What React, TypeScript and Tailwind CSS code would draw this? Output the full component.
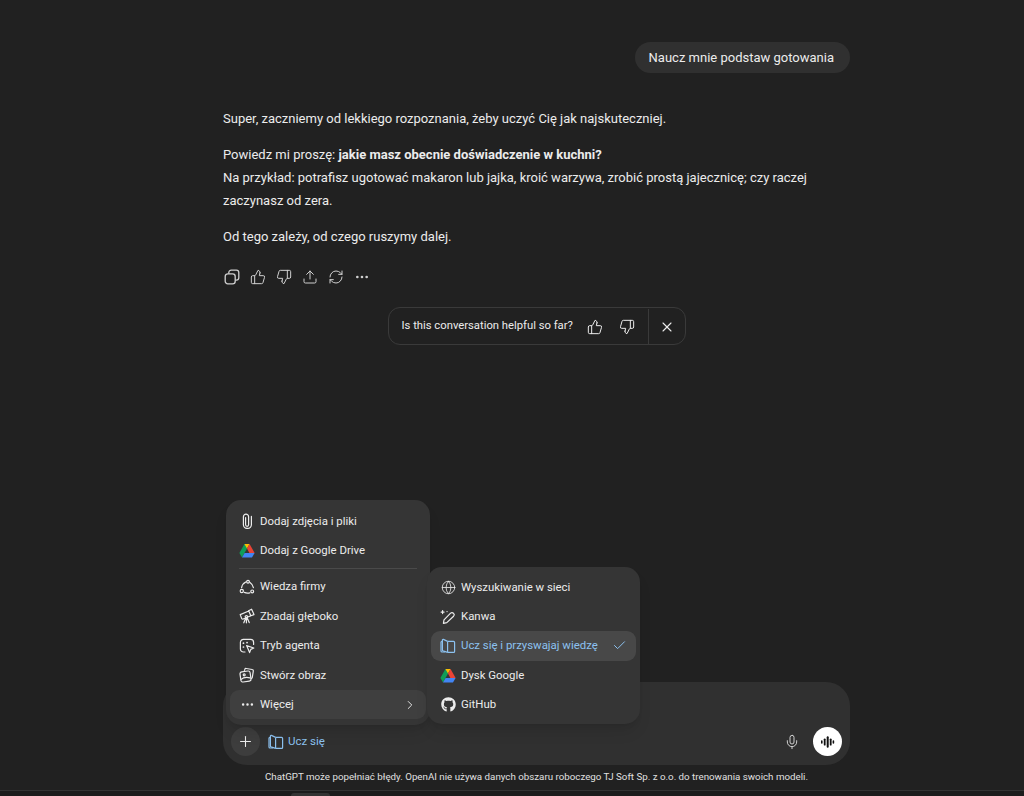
import React from "react";
import { Check, ChevronRight, Ellipsis, Globe, Mic, Plus, RefreshCw, ThumbsDown, ThumbsUp, Upload, X } from "lucide-react";
import { FaGithub } from "react-icons/fa";

function DriveIcon() {
  return (
    <svg width="16" height="15" viewBox="0 0 16 15" aria-hidden className="shrink-0">
      <path d="M5.4 1h5.2l-2.6 4.6-2.6 0z" fill="#fbbc04" />
      <path d="M5.4 1 .4 10l2.6 4.4L8 5.6z" fill="#0f9d58" />
      <path d="M10.6 1 15.6 10H10.4L8 5.6z" fill="#ea4335" />
      <path d="M5.6 10h10l-2.6 4.4H3z" fill="#4285f4" />
    </svg>
  );
}

function BookIcon({ className }: { className?: string }) {
  return (
    <svg width="16" height="16" viewBox="0 0 16 16" fill="none" stroke="currentColor" strokeWidth="1.2" strokeLinejoin="round" className={className} aria-hidden>
      <path d="M7.6 3.4v11" />
      <path d="M7.6 3.4h6a1 1 0 0 1 1 1v9a1 1 0 0 1-1 1h-6" />
      <path d="M7.6 3.4 3.4 1.4c-.5-.2-1 .1-1 .6v10c0 .4.2.7.6.9l4.6 1.5" />
      <path d="M2.4 3.4h-.4a1 1 0 0 0-1 1v8.6a1 1 0 0 0 1 1h3" />
    </svg>
  );
}

function CopyIcon() {
  return (
    <svg width="16" height="16" viewBox="0 0 16 16" fill="none" stroke="currentColor" strokeWidth="1.3" aria-hidden>
      <rect x="1.2" y="4.8" width="10" height="10" rx="2.6" />
      <path d="M4.8 4.8V3.6a2.4 2.4 0 0 1 2.4-2.4h5.2a2.4 2.4 0 0 1 2.4 2.4v5.2a2.4 2.4 0 0 1-2.4 2.4h-1.2" />
    </svg>
  );
}

function ClipIcon() {
  return (
    <svg width="16" height="16" viewBox="0 0 16 16" fill="none" stroke="currentColor" strokeWidth="1.2" strokeLinecap="round" aria-hidden>
      <path d="M6.6 4.6v7.2a1.5 1.5 0 0 0 3 0V3.8a2.6 2.6 0 0 0-5.2 0 0 0 0 0 0 0 0v8a3.6 3.6 0 0 0 3.6 3.6h.8a3.6 3.6 0 0 0 3.6-3.6V3.4" />
    </svg>
  );
}

function CompanyIcon() {
  return (
    <svg width="16" height="16" viewBox="0 0 16 16" fill="none" stroke="currentColor" strokeWidth="1.2" aria-hidden>
      <circle cx="9" cy="2.8" r="1.4" />
      <circle cx="2.8" cy="12" r="1.6" />
      <circle cx="13.2" cy="12.4" r="1.4" />
      <path d="M6.8 3C4.8 4 3 6 2.6 8.6M11 3.4c1.8 1.2 3 3 3.4 5.2M5.4 13.4c1.6.8 3.2.9 5.4.5" strokeLinecap="round" />
    </svg>
  );
}

function TelescopeIcon() {
  return (
    <svg width="16" height="16" viewBox="0 0 16 16" fill="none" stroke="currentColor" strokeWidth="1.2" strokeLinejoin="round" strokeLinecap="round" aria-hidden>
      <path d="M1.2 6.6 9.8 3l2 4.8-7.6 3.2a1.2 1.2 0 0 1-1.6-.6z" />
      <path d="M9.6 2.8 12.6 1.2l2.4 5.4-3.2 1.2" />
      <circle cx="7.4" cy="8.8" r="1.2" />
      <path d="M6.6 10.2 4.8 14.8M8.2 10 10.2 14.6M7.4 10.2v4.6" />
    </svg>
  );
}

function AgentIcon() {
  return (
    <svg width="16" height="16" viewBox="0 0 16 16" fill="none" stroke="currentColor" strokeWidth="1.2" strokeLinejoin="round" strokeLinecap="round" aria-hidden>
      <path d="M6 14H4.4a3 3 0 0 1-3-3V4.4a3 3 0 0 1 3-3h7.2a3 3 0 0 1 3 3v2" />
      <path d="M7.6 7.6 14.8 10l-3 1.4-1.2 3.2z" />
      <path d="M4.4 5.2h.1M4.4 9h.1M8 4.6h.1" strokeWidth="1.7" />
    </svg>
  );
}

function ImageIcon() {
  return (
    <svg width="16" height="16" viewBox="0 0 16 16" fill="none" stroke="currentColor" strokeWidth="1.2" strokeLinejoin="round" strokeLinecap="round" aria-hidden>
      <path d="M5.4 3.4 5.8 2.4c.2-.7.8-1 1.4-.9l6 1c.8.1 1.3.8 1.1 1.6l-1 6.2c-.1.6-.5 1-1.1 1.2" />
      <rect x="1.4" y="4.4" width="10.2" height="10.2" rx="2" transform="rotate(-8 6.5 9.5)" />
      <circle cx="5.2" cy="7.8" r="1" />
      <path d="M2.2 12.4c2-2 4.6-2.4 8.8-1.6" />
    </svg>
  );
}

function PencilIcon() {
  return (
    <svg width="16" height="16" viewBox="0 0 16 16" fill="none" stroke="currentColor" strokeWidth="1.2" strokeLinejoin="round" strokeLinecap="round" aria-hidden>
      <path d="M3.4 14.4 4 10.8 10.6 4.2a2 2 0 0 1 2.8 0l.2.2a2 2 0 0 1 0 2.8L6.8 13.6z" />
      <path d="M2.6 1.6v3M1.1 3.1h3M7 2.6h.1" />
    </svg>
  );
}

function VoiceIcon() {
  return (
    <svg width="15" height="14" viewBox="0 0 15 14" fill="#111" aria-hidden>
      <rect x="1" y="5.2" width="1.6" height="3.6" rx=".8" />
      <rect x="3.8" y="3.4" width="1.8" height="7.2" rx=".9" />
      <rect x="6.7" y="1.2" width="2" height="11.6" rx="1" />
      <rect x="9.8" y="3.4" width="1.8" height="7.2" rx=".9" />
      <rect x="12.6" y="5.2" width="1.6" height="3.6" rx=".8" />
    </svg>
  );
}

function MenuRow({ icon, label, active, right }: { icon: React.ReactNode; label: string; active?: boolean; right?: React.ReactNode }) {
  return (
    <div className={`flex h-[29.4px] items-center gap-[5px] rounded-[9px] px-[9px] text-[11.4px] ${active ? "bg-[#484848]" : ""}`}>
      <span className="flex w-[16px] shrink-0 justify-center">{icon}</span>
      <span className="flex-1 whitespace-nowrap">{label}</span>
      {right}
    </div>
  );
}

export default function App() {
  return (
    <div className="relative flex h-[796px] w-[1024px] flex-col overflow-hidden bg-[#212121] font-['Roboto',sans-serif] text-[#ececec]">
      {/* Conversation */}
      <div className="ml-[223px] flex w-[627px] flex-1 flex-col">
        <div className="mt-[42px] self-end rounded-full bg-[#303030] py-[6px] pl-[14px] pr-[16px] text-[13px] leading-[19px]">Naucz mnie podstaw gotowania</div>

        <div className="mt-[34px] text-[13px] leading-[23px]">
          <p>Super, zaczniemy od lekkiego rozpoznania, żeby uczyć Cię jak najskuteczniej.</p>
          <p className="mt-[13px]">
            Powiedz mi proszę: <strong className="font-bold">jakie masz obecnie doświadczenie w kuchni?</strong>
            <br />
            Na przykład: potrafisz ugotować makaron lub jajka, kroić warzywa, zrobić prostą jajecznicę; czy raczej
            <br />
            zaczynasz od zera.
          </p>
          <p className="mt-[13px]">Od tego zależy, od czego ruszymy dalej.</p>
        </div>

        <div className="mt-[21px] flex items-center gap-[10px] pl-[1px] text-[#d0d0d0]">
          <CopyIcon />
          <ThumbsUp size={16} strokeWidth={1.5} />
          <ThumbsDown size={16} strokeWidth={1.5} />
          <Upload size={16} strokeWidth={1.5} />
          <RefreshCw size={16} strokeWidth={1.5} />
          <Ellipsis size={16} strokeWidth={2} />
        </div>

        <div className="mt-[22px] flex h-[38px] w-[298px] items-center self-center rounded-[12px] border border-[#3a3a3a] pt-[1px] text-[11.25px]">
          <span className="pl-[13px]">Is this conversation helpful so far?</span>
          <span className="ml-[14px] flex items-center gap-[16px]">
            <ThumbsUp size={16} strokeWidth={1.5} />
            <ThumbsDown size={16} strokeWidth={1.5} />
          </span>
          <span className="ml-auto flex h-full w-[37px] items-center justify-center border-l border-[#3a3a3a]">
            <X size={16} strokeWidth={1.6} />
          </span>
        </div>
      </div>

      {/* Composer */}
      <div className="ml-[223px] flex h-[83px] w-[627px] items-end justify-between rounded-[24px] bg-[#303030] px-[8px] pb-[9px]">
        <div className="flex items-center gap-[8px]">
          <span className="flex h-[29px] w-[29px] items-center justify-center rounded-full bg-[#3d3d3d]">
            <Plus size={17} strokeWidth={1.5} />
          </span>
          <span className="flex h-[29px] items-center gap-[4px] text-[11.5px] text-[#8cc1ef]">
            <BookIcon />
            Ucz się
          </span>
        </div>
        <div className="flex items-center gap-[13px]">
          <Mic size={16} strokeWidth={1.5} className="text-[#d0d0d0]" />
          <span className="flex h-[29px] w-[29px] items-center justify-center rounded-full bg-white">
            <VoiceIcon />
          </span>
        </div>
      </div>
      <p className="h-[25px] pt-[5px] pl-[49px] text-center text-[9.75px] leading-[14px] text-[#e0e0e0]">
        ChatGPT może popełniać błędy. OpenAI nie używa danych obszaru roboczego TJ Soft Sp. z o.o. do trenowania swoich modeli.
      </p>
      <div className="h-[6px] border-t border-[#333] bg-[#1c1c1c]" />
      <div className="absolute left-[291px] top-[793px] h-[3px] w-[39px] rounded-t-[3px] bg-[#333]" />

      {/* Plus menu */}
      <div className="absolute left-[226px] top-[500px] w-[204px] rounded-[15px] bg-[#353535] px-[4px] pb-[5.5px] pt-[6.5px] shadow-lg">
        <MenuRow icon={<ClipIcon />} label="Dodaj zdjęcia i pliki" />
        <MenuRow icon={<DriveIcon />} label="Dodaj z Google Drive" />
        <div className="mx-[9px] my-[3px] border-t border-[#4a4a4a]" />
        <MenuRow icon={<CompanyIcon />} label="Wiedza firmy" />
        <MenuRow icon={<TelescopeIcon />} label="Zbadaj głęboko" />
        <MenuRow icon={<AgentIcon />} label="Tryb agenta" />
        <MenuRow icon={<ImageIcon />} label="Stwórz obraz" />
        <div className="rounded-[9px] bg-[#3f3f3f]">
          <MenuRow icon={<Ellipsis size={15} strokeWidth={2} />} label="Więcej" right={<ChevronRight size={14} strokeWidth={1.6} />} />
        </div>
      </div>

      {/* More menu */}
      <div className="absolute left-[427px] top-[567px] w-[213px] rounded-[15px] bg-[#353535] px-[4px] pb-[4.5px] pt-[5.5px] shadow-lg">
        <MenuRow icon={<Globe size={15} strokeWidth={1.3} />} label="Wyszukiwanie w sieci" />
        <MenuRow icon={<PencilIcon />} label="Kanwa" />
        <div className="text-[#8cc1ef]">
          <MenuRow active icon={<BookIcon />} label="Ucz się i przyswajaj wiedzę" right={<Check size={15} strokeWidth={1.6} />} />
        </div>
        <MenuRow icon={<DriveIcon />} label="Dysk Google" />
        <MenuRow icon={<FaGithub size={15} />} label="GitHub" />
      </div>
    </div>
  );
}
